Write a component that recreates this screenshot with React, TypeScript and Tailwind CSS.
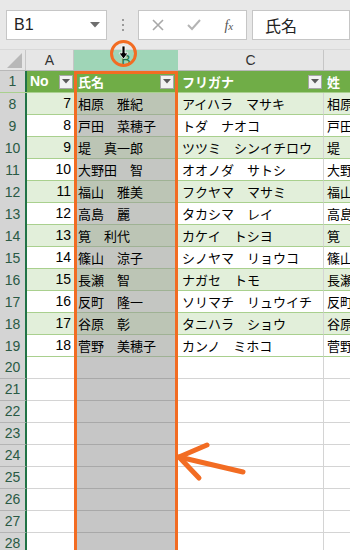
import React from "react";

interface Person {
  row: number;
  no: number;
  name: string;
  kana: string;
  sei: string;
}

const people: Person[] = [
  { row: 8, no: 7, name: "相原　雅紀", kana: "アイハラ　マサキ", sei: "相原" },
  { row: 9, no: 8, name: "戸田　菜穂子", kana: "トダ　ナオコ", sei: "戸田" },
  { row: 10, no: 9, name: "堤　真一郎", kana: "ツツミ　シンイチロウ", sei: "堤" },
  { row: 11, no: 10, name: "大野田　智", kana: "オオノダ　サトシ", sei: "大野" },
  { row: 12, no: 11, name: "福山　雅美", kana: "フクヤマ　マサミ", sei: "福山" },
  { row: 13, no: 12, name: "高島　麗", kana: "タカシマ　レイ", sei: "高島" },
  { row: 14, no: 13, name: "筧　利代", kana: "カケイ　トシヨ", sei: "筧" },
  { row: 15, no: 14, name: "篠山　涼子", kana: "シノヤマ　リョウコ", sei: "篠山" },
  { row: 16, no: 15, name: "長瀬　智", kana: "ナガセ　トモ", sei: "長瀬" },
  { row: 17, no: 16, name: "反町　隆一", kana: "ソリマチ　リュウイチ", sei: "反町" },
  { row: 18, no: 17, name: "谷原　彰", kana: "タニハラ　ショウ", sei: "谷原" },
  { row: 19, no: 18, name: "菅野　美穂子", kana: "カンノ　ミホコ", sei: "菅野" },
];

const emptyRows = [20, 21, 22, 23, 24, 25, 26, 27, 28];

const jp = "font-['Noto_Sans_CJK_JP','Noto_Sans',sans-serif]";
const ui = "font-['Liberation_Sans','Noto_Sans_CJK_JP',sans-serif]";

const FilterButton = () => (
  <div className="w-[14px] h-[14px] shrink-0 bg-[#f2f2f2] border border-[#a6a6a6] flex items-center justify-center">
    <svg width="8" height="5" viewBox="0 0 8 5">
      <path d="M0 0 L8 0 L4 4.5 Z" fill="#5a5a5a" />
    </svg>
  </div>
);

const RowHead = ({ n }: { n: number }) => (
  <div
    className={`w-[27px] shrink-0 h-full bg-[#d4d4d4] border-r-2 border-[#217346] flex items-center justify-center text-[14px] text-[#2a5a44] ${ui}`}
  >
    {n}
  </div>
);

export default function App() {
  return (
    <div className={`relative w-[350px] h-[550px] overflow-hidden bg-white ${ui}`}>
      {/* formula bar */}
      <div className="h-[50px] bg-[#e8e8e8] flex items-start pt-[10px] pl-[6px] border-b border-[#d8d8d8]">
        <div className="w-[101px] h-[30px] bg-white border border-[#c6c6c6] flex items-center justify-between pl-[7px] pr-[6px]">
          <span className="text-[16px] text-[#222]">B1</span>
          <svg width="10" height="6" viewBox="0 0 10 6">
            <path d="M0 0 L10 0 L5 5.5 Z" fill="#6e6e6e" />
          </svg>
        </div>
        <div className="w-[31px] h-[30px] flex flex-col items-center justify-center gap-[3px]">
          <div className="w-[2px] h-[2px] bg-[#9a9a9a]" />
          <div className="w-[2px] h-[2px] bg-[#9a9a9a]" />
          <div className="w-[2px] h-[2px] bg-[#9a9a9a]" />
        </div>
        <div className="w-[109px] h-[30px] bg-white border border-[#c6c6c6] flex items-center">
          <div className="w-[38px] flex justify-center">
            <svg width="12" height="12" viewBox="0 0 12 12">
              <path d="M1 1 L11 11 M11 1 L1 11" stroke="#a8a8a8" strokeWidth="1.6" />
            </svg>
          </div>
          <div className="w-[36px] flex justify-center">
            <svg width="14" height="12" viewBox="0 0 14 12">
              <path d="M1 6 L5 10 L13 1" stroke="#b4b4b4" strokeWidth="2" fill="none" />
            </svg>
          </div>
          <div className="w-[35px] flex justify-center">
            <span className="font-['Liberation_Serif',serif] italic text-[14px] text-[#555]">
              f<span className="text-[11px]">x</span>
            </span>
          </div>
        </div>
        <div className="ml-[5px] flex-1 h-[30px] bg-white border border-[#c6c6c6] flex items-center pl-[12px]">
          <span className={`text-[16px] text-[#222] ${jp}`}>氏名</span>
        </div>
      </div>

      {/* column headers */}
      <div className="h-[21px] flex bg-[#e6e6e6] border-b border-[#b8b8b8]">
        <div className="w-[26px] shrink-0 flex items-end justify-end pr-[3px] pb-[2px] border-r border-[#c6c6c6]">
          <svg width="15" height="15" viewBox="0 0 15 15">
            <path d="M15 0 L15 15 L0 15 Z" fill="#b8b8b8" />
          </svg>
        </div>
        <div className="w-[48px] shrink-0 flex items-center justify-center text-[14px] text-[#333] border-r border-[#c6c6c6]">
          A
        </div>
        <div className="w-[104px] shrink-0 flex items-center justify-center text-[14px] text-[#217346] bg-[#9fd5b7]">
          B
        </div>
        <div className="w-[146px] shrink-0 flex items-center justify-center text-[14px] text-[#333] border-r border-[#c6c6c6]">
          C
        </div>
        <div className="flex-1" />
      </div>

      {/* header row 1 */}
      <div className="h-[22px] flex border-b border-[#a9d08e]">
        <RowHead n={1} />
        <div className="w-[47px] shrink-0 bg-[#70ad47] flex items-center justify-between pl-[3px] pr-[1px]">
          <span className="text-white font-bold text-[14px]">No</span>
          <FilterButton />
        </div>
        <div className="w-[104px] shrink-0 bg-[#70ad47] flex items-center justify-between pl-[4px] pr-[4px]">
          <span className={`text-white font-bold text-[13px] ${jp}`}>氏名</span>
          <FilterButton />
        </div>
        <div className="w-[146px] shrink-0 bg-[#70ad47] flex items-center justify-between pl-[4px] pr-[2px]">
          <span className={`text-white font-bold text-[13px] ${jp}`}>フリガナ</span>
          <FilterButton />
        </div>
        <div className="flex-1 bg-[#70ad47] flex items-center pl-[3px]">
          <span className={`text-white font-bold text-[13px] ${jp}`}>姓</span>
        </div>
      </div>

      {/* data rows */}
      {people.map((p, i) => {
        const band = i % 2 === 0;
        return (
          <div key={p.row} className="h-[22px] flex">
            <RowHead n={p.row} />
            <div
              className={`w-[47px] shrink-0 border-b border-[#a9d08e] flex items-center justify-end pr-[3px] text-[14px] text-black ${
                band ? "bg-[#e2efda]" : "bg-white"
              }`}
            >
              {p.no}
            </div>
            <div
              className={`w-[104px] shrink-0 border-b border-[#9fb294] flex items-center pl-[4px] text-[13px] text-black whitespace-nowrap overflow-hidden ${jp} ${
                band ? "bg-[#bcc5b5]" : "bg-[#c4c6c2]"
              }`}
            >
              {p.name}
            </div>
            <div
              className={`w-[146px] shrink-0 border-b border-r border-b-[#a9d08e] border-r-[#d4d4d4] flex items-center pl-[4px] text-[13px] text-black whitespace-nowrap overflow-hidden ${jp} ${
                band ? "bg-[#e2efda]" : "bg-white"
              }`}
            >
              {p.kana}
            </div>
            <div
              className={`flex-1 border-b border-[#a9d08e] flex items-center pl-[3px] text-[13px] text-black whitespace-nowrap overflow-hidden ${jp} ${
                band ? "bg-[#e2efda]" : "bg-white"
              }`}
            >
              {p.sei}
            </div>
          </div>
        );
      })}

      {/* empty rows */}
      {emptyRows.map((n) => (
        <div key={n} className="h-[22px] flex">
          <div className="w-[27px] shrink-0 h-full bg-[#d4d4d4] border-r-2 border-b border-r-[#217346] border-b-[#b4b4b4] flex items-center justify-center text-[14px] text-[#2a5a44]">
            {n}
          </div>
          <div className="w-[47px] shrink-0 border-b border-[#d4d4d4] bg-white" />
          <div className="w-[104px] shrink-0 border-b border-[#a8a8a8] bg-[#c6c6c6]" />
          <div className="w-[146px] shrink-0 border-b border-r border-[#d4d4d4] bg-white" />
          <div className="flex-1 border-b border-[#d4d4d4] bg-white" />
        </div>
      ))}

      {/* orange selection box annotation */}
      <div className="absolute left-[74px] top-[71px] w-[104px] h-[490px] border-[3px] border-[#f26c23]" />

      {/* cursor in circle */}
      <svg className="absolute left-[109px] top-[39px]" width="30" height="30" viewBox="0 0 30 30">
        <circle cx="14.5" cy="14.5" r="12" fill="none" stroke="#f26c23" strokeWidth="3" />
        <path d="M13 7 L16 7 L16 14 L19 14 L14.5 20 L10 14 L13 14 Z" fill="#000" stroke="#fff" strokeWidth="0.8" />
      </svg>

      {/* pointing arrow */}
      <svg className="absolute left-[170px] top-[435px]" width="90" height="55" viewBox="0 0 90 55">
        <path d="M73 37 L9 22" stroke="#f26c23" strokeWidth="5" strokeLinecap="round" fill="none" />
        <path d="M37 10 L9 22 L29 43" stroke="#f26c23" strokeWidth="5" strokeLinecap="round" strokeLinejoin="round" fill="none" />
      </svg>
    </div>
  );
}
